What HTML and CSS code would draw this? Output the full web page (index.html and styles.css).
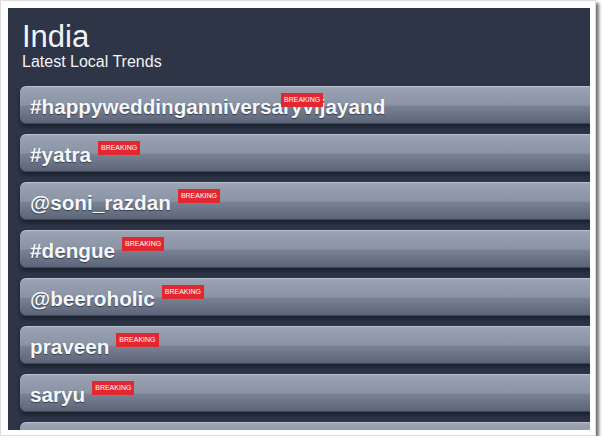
FILE: index.html
```html
<!DOCTYPE html>
<html lang="en">
<head>
  <meta charset="UTF-8" />
  <title>India - Latest Local Trends</title>
  <link rel="stylesheet" href="styles.css">
</head>
<body>

  <div class="shot">
    <div class="panel">
      <div class="header">
        <h1>India</h1>
        <div class="subtitle">Latest Local Trends</div>
      </div>

      <div class="trends">
        <div class="trend">
          <span class="title">#happyweddinganniversaryvijayand</span>
          <span class="badge badge-over">BREAKING</span>
        </div>
        <div class="trend">
          <span class="title">#yatra</span>
          <span class="badge">BREAKING</span>
        </div>
        <div class="trend">
          <span class="title">@soni_razdan</span>
          <span class="badge">BREAKING</span>
        </div>
        <div class="trend">
          <span class="title">#dengue</span>
          <span class="badge">BREAKING</span>
        </div>
        <div class="trend">
          <span class="title">@beeroholic</span>
          <span class="badge">BREAKING</span>
        </div>
        <div class="trend">
          <span class="title">praveen</span>
          <span class="badge">BREAKING</span>
        </div>
        <div class="trend">
          <span class="title">saryu</span>
          <span class="badge">BREAKING</span>
        </div>
        <div class="trend"></div>
      </div>
    </div>
  </div>

</body>
</html>
```

FILE: styles.css
```css
body {
  margin: 0;
  background: #fff;
  font-family: "Liberation Sans", Arial, sans-serif;
}

.shot {
  width: 596px;
  height: 436px;
  box-sizing: border-box;
  padding: 7px 5px 5px 7px;
  border: 1px solid #dcdcdc;
  background: #fff;
  box-shadow: 3px 3px 3px rgba(0,0,0,0.55);
}

.panel {
  width: 582px;
  height: 422px;
  background-color: #2d3547;
  overflow: hidden;
}

.header {
  padding: 13px 0 0 14px;
  color: #f2f4f8;
}

h1 {
  margin: 0;
  font-size: 31px;
  font-weight: normal;
  line-height: 31px;
}

.subtitle {
  margin-top: 1px;
  font-size: 16px;
  line-height: 18px;
}

.trends {
  display: flex;
  flex-direction: column;
  gap: 10px;
  padding: 15px 0 0 12px;
  margin-right: -20px;
}

.trend {
  position: relative;
  display: flex;
  align-items: center;
  flex-shrink: 0;
  height: 38px;
  box-sizing: border-box;
  padding: 3px 10px 0 10px;
  border-radius: 6px 0 0 6px;
  background: linear-gradient(#a2acbc 0, #97a1b2 8%, #8a94a5 50%, #798295 53%, #5b6477 100%);
  box-shadow: inset 0 1px 0 rgba(255,255,255,0.25), inset 0 -1px 0 rgba(30,36,50,0.5), 0 3px 4px rgba(10,14,24,0.55);
}

.title {
  font-size: 20.7px;
  font-weight: bold;
  color: #f6f8fb;
  text-shadow: 0 1px 1px rgba(20,26,40,0.6);
  white-space: nowrap;
}

.badge {
  align-self: flex-start;
  margin: 4px 0 0 7px;
  padding: 0 3px;
  height: 14px;
  line-height: 14px;
  background-color: #e1282e;
  color: #fff;
  font-size: 7px;
  white-space: nowrap;
}

.badge-over {
  position: absolute;
  left: 261px;
  top: 7px;
  margin: 0;
}
```
